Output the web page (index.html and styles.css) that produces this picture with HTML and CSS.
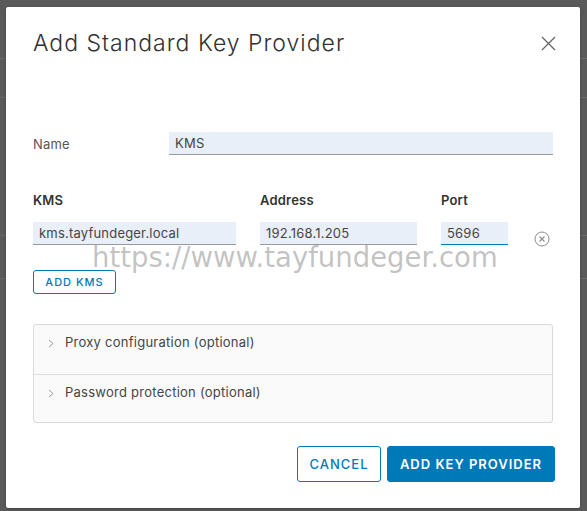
FILE: index.html
```html
<!DOCTYPE html>
<html>
<head>
<meta charset="utf-8">
<link rel="stylesheet" href="styles.css">
</head>
<body>
<div class="backdrop">
  <div class="bg-line l1"></div>
  <div class="bg-line l2"></div>
  <div class="bg-line l3"></div>
  <div class="bg-line l4"></div>
</div>
<div class="modal">
  <div class="modal-header">
    <h3 class="modal-title">Add Standard Key Provider</h3>
    <button class="close" aria-label="Close">
      <svg width="15" height="15" viewBox="0 0 15 15"><path d="M1 1L14 14M14 1L1 14" stroke="#666" stroke-width="1.3" fill="none"/></svg>
    </button>
  </div>
  <div class="modal-body">
    <div class="name-row">
      <label class="lbl">Name</label>
      <div class="input">KMS</div>
    </div>
    <div class="kms-grid">
      <div class="col-head">KMS</div>
      <div class="col-head">Address</div>
      <div class="col-head">Port</div>
      <div></div>
      <div class="input">kms.tayfundeger.local</div>
      <div class="input">192.168.1.205</div>
      <div class="input focus">5696</div>
      <div class="remove">
        <svg width="16" height="16" viewBox="0 0 16 16"><circle cx="8" cy="8" r="7" stroke="#8c8c8c" stroke-width="1" fill="none"/><path d="M5.5 5.5L10.5 10.5M10.5 5.5L5.5 10.5" stroke="#8c8c8c" stroke-width="1.1"/></svg>
      </div>
    </div>
    <button class="btn btn-outline small">ADD KMS</button>
    <div class="accordion">
      <div class="acc-row">
        <svg class="chev" width="6" height="9" viewBox="0 0 6 9"><path d="M1 1L5 4.5L1 8" stroke="#9a9a9a" stroke-width="1" fill="none"/></svg>
        <span>Proxy configuration (optional)</span>
      </div>
      <div class="acc-row">
        <svg class="chev" width="6" height="9" viewBox="0 0 6 9"><path d="M1 1L5 4.5L1 8" stroke="#9a9a9a" stroke-width="1" fill="none"/></svg>
        <span>Password protection (optional)</span>
      </div>
    </div>
  </div>
  <div class="modal-footer">
    <button class="btn btn-outline">CANCEL</button>
    <button class="btn btn-primary">ADD KEY PROVIDER</button>
  </div>
  <div class="watermark">https://www.tayfundeger.com</div>
</div>
</body>
</html>
```
FILE: styles.css
```css
* { box-sizing: border-box; }
html, body { margin: 0; padding: 0; }
body {
  width: 587px;
  height: 511px;
  overflow: hidden;
  background: #5a5a5a;
  font-family: Inter, "Open Sans", sans-serif;
  position: relative;
}
.backdrop { position: absolute; inset: 0; }
.bg-line { position: absolute; left: 0; right: 0; height: 1px; background: #6a6a6a; }
.l1 { top: 58px; }
.l2 { top: 97px; }
.l3 { top: 235px; }
.l4 { top: 278px; }

.modal {
  position: absolute;
  left: 6px;
  top: 7px;
  width: 574px;
  height: 501px;
  background: #fff;
  border-radius: 2px;
  box-shadow: 0 1px 3px rgba(0,0,0,0.3);
  display: flex;
  flex-direction: column;
}
.modal-header {
  display: flex;
  justify-content: space-between;
  align-items: flex-start;
  padding: 20px 24px 0 27px;
}
.modal-title {
  margin: 0;
  font-size: 23px;
  font-weight: 300;
  line-height: 32px;
  letter-spacing: 1px;
  color: #313131;
}
.close {
  border: 0;
  background: none;
  padding: 0;
  margin-top: 9px;
  width: 15px;
  height: 15px;
  display: block;
}
.close svg { display: block; }

.modal-body {
  padding: 73px 27px 0 27px;
}
.name-row {
  display: grid;
  grid-template-columns: 136px 384px;
  align-items: center;
  height: 23px;
}
.lbl {
  font-size: 13px;
  color: #565656;
  letter-spacing: 0.2px;
}
.input {
  height: 23px;
  background: #e9eff9;
  border-bottom: 1px solid #9a9a9a;
  font-size: 13px;
  color: #454545;
  padding: 0 6px;
  line-height: 22px;
  letter-spacing: 0.2px;
}
.input.focus { border-bottom: 1px solid #0079b8; }

.kms-grid {
  margin-top: 37px;
  display: grid;
  grid-template-columns: 203px 157px 67px 16px;
  grid-template-rows: 16px 23px;
  column-gap: 24px;
  row-gap: 14px;
  align-items: center;
}
.col-head {
  font-size: 13px;
  font-weight: 600;
  color: #333;
  line-height: 16px;
  letter-spacing: 0.2px;
}
.remove { align-self: start; margin-left: 2px; margin-top: 9px; height: 16px; }
.remove svg { display: block; }

.btn {
  font-family: Inter, "Open Sans", sans-serif;
  font-weight: 600;
  letter-spacing: 1px;
  border-radius: 3px;
  cursor: pointer;
}
.btn-outline {
  background: #fff;
  border: 1px solid #0079b8;
  color: #0079b8;
}
.btn.small {
  margin-top: 25px;
  height: 24px;
  width: 83px;
  font-size: 11px;
  font-weight: 500;
  padding: 0;
  display: block;
}
.accordion {
  margin-top: 30px;
  width: 520px;
  border: 1px solid #d9d9d9;
  border-radius: 3px;
  background: #fafafa;
}
.acc-row {
  height: 49px;
  padding: 8px 0 0 14px;
  display: flex;
  align-items: flex-start;
  font-size: 13px;
  color: #454545;
  line-height: 18px;
  letter-spacing: 0.25px;
}
.acc-row + .acc-row { border-top: 1px solid #dcdcdc; height: 48px; }
.chev { margin-top: 6px; margin-right: 11px; flex: none; }

.modal-footer {
  margin-top: auto;
  display: flex;
  justify-content: flex-end;
  gap: 6px;
  padding: 0 25px 26px 0;
}
.modal-footer .btn {
  height: 36px;
  font-size: 13px;
  padding: 0;
}
.modal-footer .btn-outline { width: 84px; font-weight: 500; }
.btn-primary {
  width: 168px;
  background: #0079b8;
  border: 1px solid #0079b8;
  color: #fff;
}
.watermark {
  position: absolute;
  left: 86px;
  top: 234px;
  font-family: "DejaVu Sans", sans-serif;
  font-size: 27.5px;
  color: rgba(120,120,120,0.45);
  pointer-events: none;
  white-space: nowrap;
}
```
